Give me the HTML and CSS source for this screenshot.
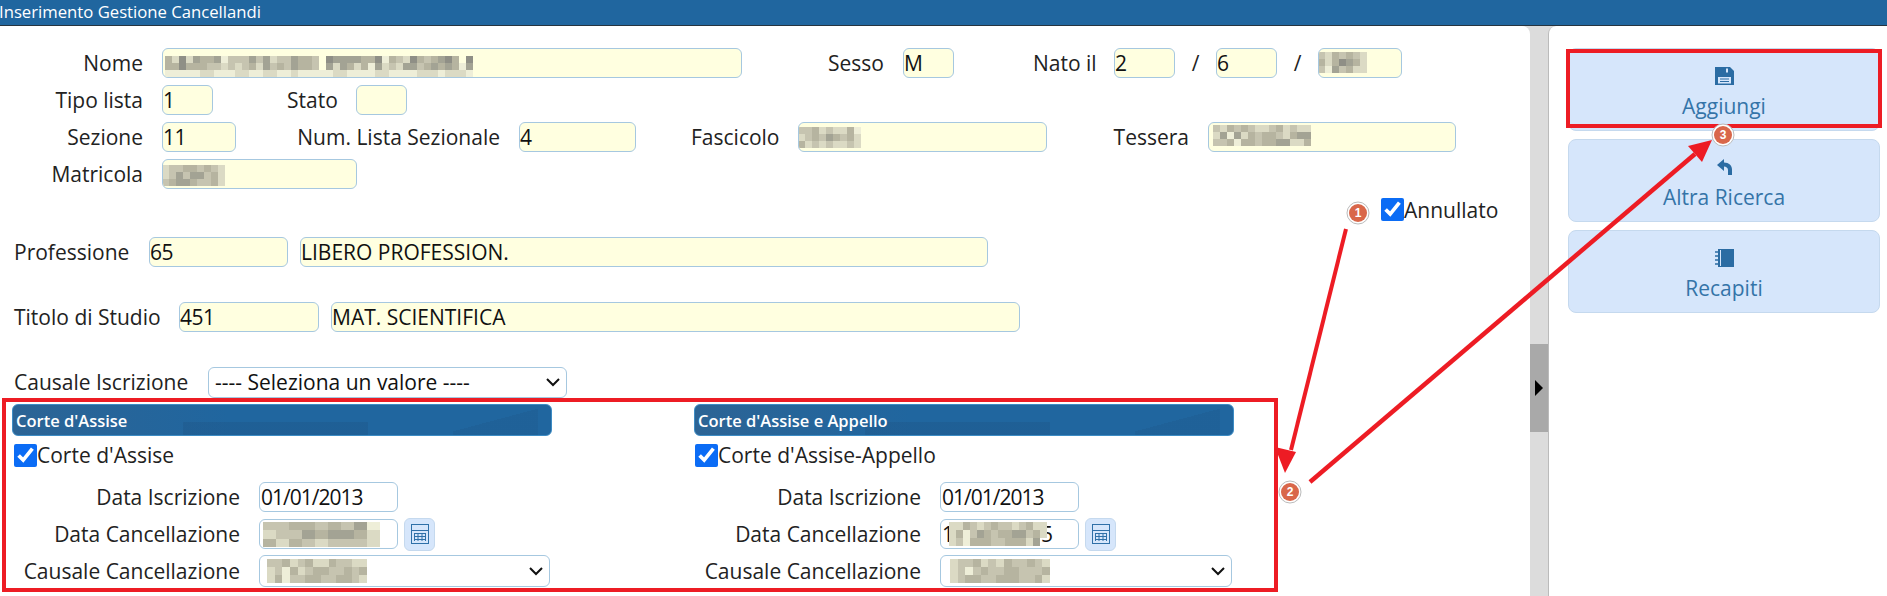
FILE: index.html
```html
<!DOCTYPE html>
<html>
<head>
<meta charset="utf-8">
<title>Inserimento Gestione Cancellandi</title>
<link rel="stylesheet" href="styles.css">
</head>
<body>
<div class="titlebar">Inserimento Gestione Cancellandi</div>
<div class="main">
  <div class="form">
    <div class="row">
      <label class="lbl lbl-top">Nome</label>
      <div class="field w-nome"><svg class="blur m-nome" viewBox="0 0 44 3" width="308" height="21" preserveAspectRatio="none">
        <path class="a" d="M2 .5h1M23 .5h1M30 .5h1M35 .5h1M40 .5h1M43 .5h1M2 1.5h1"/>
        <path class="b" d="M4 .5h1M7 .5h1M12 .5h1M14 .5h1M18 .5h1M24 .5h4M39 .5h1M14 1.5h1M18 1.5h1M23 1.5h1M25 1.5h1M30 1.5h1M34 1.5h2M38 1.5h1M40 1.5h1M43 1.5h1"/>
        <path class="c" d="M0 .5h1M5 .5h2M19 .5h2M28 .5h2M32 .5h1M36 .5h1M38 .5h1M41 .5h1M0 1.5h2M3 1.5h3M12 1.5h1M16 1.5h1M19 1.5h2M26 1.5h1M28 1.5h1M37 1.5h1M39 1.5h1M41 1.5h1"/>
        <path class="d" d="M9 .5h3M13 .5h1M16 .5h2M21 .5h1M33 .5h1M37 .5h1M6 1.5h2M9 1.5h1M11 1.5h1M15 1.5h1M17 1.5h1M21 1.5h1M32 1.5h1M36 1.5h1"/>
        <path class="e" d="M1 .5h1M3 .5h1M15 .5h1M34 .5h1M8 1.5h1M10 1.5h1M13 1.5h1M24 1.5h1M27 1.5h1M31 1.5h1M33 1.5h1M5 2.5h2M10 2.5h2M14 2.5h2M18 2.5h1M24 2.5h2M30 2.5h2M36 2.5h3M40 2.5h3"/>
        <path class="f" d="M8 .5h1M31 .5h1M29 1.5h1M42 1.5h1M0 2.5h5M7 2.5h3M12 2.5h2M16 2.5h2M19 2.5h5M26 2.5h4M32 2.5h4M39 2.5h1M43 2.5h1"/>
      </svg></div>
      <label class="lbl l-sesso">Sesso</label>
      <input class="field w-short" value="M">
      <label class="lbl l-nato">Nato il</label>
      <input class="field w-date" value="2">
      <span class="slash">/</span>
      <input class="field w-date" value="6">
      <span class="slash">/</span>
      <div class="field w-year"><svg class="blur m-year" viewBox="0 0 7 3" width="49" height="21" preserveAspectRatio="none">
        <path class="d" d="M0 .5h1M3 .5h1M5 .5h1M0 2.5h1M3 2.5h1"/>
        <path class="e" d="M1 .5h1M6 .5h1M1 1.5h1M6 1.5h1M5 2.5h2"/>
        <path class="c" d="M2 .5h1M4 .5h1M0 1.5h1M2 1.5h1M5 1.5h1M4 2.5h1"/>
        <path class="a" d="M3 1.5h1"/>
        <path class="b" d="M4 1.5h1M2 2.5h1"/>
        <path class="f" d="M1 2.5h1"/>
      </svg></div>
    </div>
    <div class="row row-next">
      <label class="lbl lbl-top">Tipo lista</label>
      <input class="field w-short" value="1">
      <label class="lbl l-stato">Stato</label>
      <input class="field w-short" value="">
    </div>
    <div class="row row-next">
      <label class="lbl lbl-top">Sezione</label>
      <input class="field w-sez" value="11">
      <label class="lbl l-num">Num. Lista Sezionale</label>
      <input class="field w-num" value="4">
      <label class="lbl l-fasc">Fascicolo</label>
      <div class="field w-fasc"><svg class="blur m-fasc" viewBox="0 0 9 3" width="63" height="21" preserveAspectRatio="none">
        <path class="b" d="M4 1.5h1"/>
        <path class="c" d="M2 .5h1M7 .5h1M2 1.5h1M5 1.5h1M7 1.5h1M0 2.5h1"/>
        <path class="d" d="M0 .5h2M4 .5h1M1 1.5h1M3 1.5h1M6 1.5h1M2 2.5h1M4 2.5h1M7 2.5h1"/>
        <path class="e" d="M3 .5h1M5 .5h2M0 1.5h1M8 1.5h1M1 2.5h1M3 2.5h1M5 2.5h2M8 2.5h1"/>
        <path class="f" d="M8 .5h1"/>
      </svg></div>
      <label class="lbl l-tess">Tessera</label>
      <div class="field w-tess"><svg class="blur m-tess" viewBox="0 0 14 3" width="98" height="21" preserveAspectRatio="none">
        <path class="b" d="M1 1.5h1M3 1.5h1M12 1.5h2M9 2.5h2"/>
        <path class="c" d="M2 .5h1M4 .5h1M9 .5h1M5 1.5h1M7 1.5h2M11 1.5h1M4 2.5h2M7 2.5h2M13 2.5h1M2 2.5h1"/>
        <path class="d" d="M0 .5h1M3 .5h1M5 .5h1M8 .5h1M11 .5h1M6 1.5h1M9 1.5h1M0 2.5h2M6 2.5h1"/>
        <path class="e" d="M1 .5h1M6 .5h2M10 .5h1M12 .5h2M0 1.5h1M4 1.5h1M10 1.5h1M12 2.5h1M11 2.5h1"/>
        <path class="f" d="M2 1.5h1M3 2.5h1"/>
      </svg></div>
    </div>
    <div class="row row-next">
      <label class="lbl lbl-top">Matricola</label>
      <div class="field w-mat"><svg class="blur m-mat" viewBox="0 0 9 3" width="63" height="21" preserveAspectRatio="none">
        <path class="c" d="M3 .5h2M6 .5h1M7 1.5h1M1 2.5h1M4 2.5h1M7 2.5h1"/>
        <path class="b" d="M2 1.5h1M4 1.5h2M2 2.5h2"/>
        <path class="d" d="M1 .5h2M5 .5h1M7 .5h1M1 1.5h1M3 1.5h1M6 1.5h1M5 2.5h2M0 2.5h1"/>
        <path class="e" d="M0 .5h1M8 .5h1M0 1.5h1M8 1.5h1M8 2.5h1"/>
      </svg></div>
    </div>
    <div class="row row-annul">
      <input type="checkbox" class="check" checked>
      <span class="check-text">Annullato</span>
    </div>
    <div class="row row-prof">
      <label class="lbl l-prof">Professione</label>
      <input class="field w-code" value="65">
      <input class="field w-prof" value="LIBERO PROFESSION.">
    </div>
    <div class="row row-tit">
      <label class="lbl l-tit">Titolo di Studio</label>
      <input class="field w-tcode" value="451">
      <input class="field w-tprof" value="MAT. SCIENTIFICA">
    </div>
    <div class="row row-caus">
      <label class="lbl l-caus">Causale Iscrizione</label>
      <select class="sel w-caus"><option>---- Seleziona un valore ----</option></select>
    </div>
    <div class="columns">
      <section class="col">
        <h3 class="sect">Corte d'Assise</h3>
        <div class="row row-check"><input type="checkbox" class="check" checked><span class="check-text">Corte d'Assise</span></div>
        <div class="row row-data"><label class="lbl lbl-col">Data Iscrizione</label><input class="plain num w-data" value="01/01/2013"></div>
        <div class="row row-canc"><label class="lbl lbl-col">Data Cancellazione</label><div class="plain w-data"><svg class="blur m-canc" viewBox="0 0 9 3" width="117" height="25" preserveAspectRatio="none">
          <path class="b" d="M3 1.5h1M5 1.5h2M7 .5h1"/>
          <path class="c" d="M2 .5h2M5 .5h1M2 2.5h1M0 2.5h1M7 1.5h1M4 1.5h1"/>
          <path class="d" d="M0 .5h2M4 .5h1M6 .5h1M1 1.5h1M2 1.5h1M3 2.5h1M5 2.5h1M7 2.5h1M6 2.5h1"/>
          <path class="e" d="M0 1.5h1M8 1.5h1M1 2.5h1M4 2.5h1M8 2.5h1"/>
          <path class="f" d="M8 .5h1"/>
        </svg></div>
          <span class="cal"><svg width="18" height="20" viewBox="0 0 18 20"><rect x=".5" y=".5" width="17" height="19" fill="none" stroke="#2f70a8"/><path d="M1 6.500h16M3 9.500h12M3 12.500h12M3 15.500h12M3.500 9v8M7 9v8M11 9v8M14.500 9v8" fill="none" stroke="#2f70a8"/></svg></span></div>
        <div class="row row-sel"><label class="lbl lbl-col">Causale Cancellazione</label><div class="sel w-csel"><svg class="blur m-sel" viewBox="0 0 13 3" width="100" height="24" preserveAspectRatio="none">
          <path class="c" d="M2 .5h1M5 .5h1M8 .5h1M3 1.5h1M6 1.5h2M10 1.5h1M12 1.5h1M1 2.5h1M5 2.5h2M9 2.5h2"/>
          <path class="d" d="M0 .5h2M4 .5h1M9 .5h2M1 1.5h1M5 1.5h1M8 1.5h2M11 1.5h1M3 2.5h2M7 2.5h2M11 2.5h1"/>
          <path class="e" d="M3 .5h1M6 .5h2M11 .5h2M0 1.5h1M4 1.5h1M0 2.5h1M12 2.5h1"/>
          <path class="f" d="M2 1.5h1M2 2.5h1"/>
        </svg><svg class="chev" width="16" height="10" viewBox="0 0 16 10"><path d="M2 2l6 6 6-6" fill="none" stroke="#111" stroke-width="2"/></svg></div></div>
      </section>
      <section class="col col-right">
        <h3 class="sect">Corte d'Assise e Appello</h3>
        <div class="row row-check"><input type="checkbox" class="check" checked><span class="check-text">Corte d'Assise-Appello</span></div>
        <div class="row row-data"><label class="lbl lbl-col">Data Iscrizione</label><input class="plain num w-data" value="01/01/2013"></div>
        <div class="row row-canc"><label class="lbl lbl-col">Data Cancellazione</label><div class="plain num w-data partial">1<svg class="blur m-part" viewBox="0 0 14 3" width="98" height="24" preserveAspectRatio="none">
          <path class="b" d="M4 1.5h1M9 1.5h2M12 2.5h1"/>
          <path class="c" d="M2 .5h1M6 .5h1M11 .5h1M1 1.5h1M5 1.5h1M7 1.5h2M12 1.5h1M3 2.5h3M8 2.5h3"/>
          <path class="d" d="M3 .5h1M5 .5h1M7 .5h2M10 .5h1M3 1.5h1M6 1.5h1M11 1.5h1M6 2.5h2M1 2.5h1"/>
          <path class="e" d="M0 .5h2M4 .5h1M9 .5h1M12 .5h2M0 1.5h1M13 1.5h1M0 2.5h1M11 2.5h1"/>
          <path class="f" d="M2 1.500h1M2 2.5h1"/>
        </svg><span class="tail">5</span></div>
          <span class="cal"><svg width="18" height="20" viewBox="0 0 18 20"><rect x=".5" y=".5" width="17" height="19" fill="none" stroke="#2f70a8"/><path d="M1 6.500h16M3 9.500h12M3 12.500h12M3 15.500h12M3.500 9v8M7 9v8M11 9v8M14.500 9v8" fill="none" stroke="#2f70a8"/></svg></span></div>
        <div class="row row-sel"><label class="lbl lbl-col">Causale Cancellazione</label><div class="sel w-csel"><svg class="blur m-sel2" viewBox="0 0 13 3" width="100" height="24" preserveAspectRatio="none">
          <path class="c" d="M3 .5h1M7 .5h1M10 .5h1M4 1.5h1M7 1.5h2M12 1.5h1M2 2.5h2M6 2.5h3M11 2.5h1"/>
          <path class="d" d="M1 .5h2M5 .5h1M8 .5h2M11 .5h1M1 1.5h1M3 1.5h1M5 1.5h2M9 1.5h3M1 2.5h1M4 2.5h2M9 2.5h2"/>
          <path class="e" d="M0 .5h1M4 .5h1M6 .5h1M12 .5h1M0 1.5h1M0 2.5h1M12 2.5h1"/>
          <path class="f" d="M2 1.5h1"/>
        </svg><svg class="chev" width="16" height="10" viewBox="0 0 16 10"><path d="M2 2l6 6 6-6" fill="none" stroke="#111" stroke-width="2"/></svg></div></div>
      </section>
    </div>
  </div>
  <div class="splitter"><div class="handle"><svg width="10" height="16" viewBox="0 0 10 16"><path d="M1 0l8 8-8 8z" fill="#000"/></svg></div></div>
  <div class="side">
    <button class="btn"><svg width="19" height="18" viewBox="0 0 19 18"><path d="M0 0h15l4 4v14H0zM11 1.500v4h2v-4zM3 10v6.500h13V10z" fill="#2b6ca3" fill-rule="evenodd"/><path d="M5 12h9M5 14.500h9" stroke="#2b6ca3"/></svg>Aggiungi</button>
    <button class="btn btn-back"><svg width="15" height="16" viewBox="0 0 15 16"><path d="M0 6l7-6v3.500c5 0 8 3 8 7V16h-4v-5c0-2-2-3.500-4-3.500V12z" fill="#2b6ca3"/></svg>Altra Ricerca</button>
    <button class="btn"><svg width="19" height="18" viewBox="0 0 19 18"><path d="M3 0h16v18H3zM5 1v16h1V1z" fill="#2b6ca3" fill-rule="evenodd"/><path d="M0 3h4M0 7h4M0 11h4M0 15h4" stroke="#2b6ca3" stroke-width="1.5"/></svg>Recapiti</button>
  </div>
</div>
<svg class="notes" width="1887" height="596">
  <rect x="4" y="400" width="1272" height="190" fill="none" stroke="#ed1c24" stroke-width="4"/>
  <rect x="1568" y="51" width="312" height="75" fill="none" stroke="#ed1c24" stroke-width="4"/>
  <path d="M1346 229L1291 450" stroke="#ed1c24" stroke-width="4"/>
  <path d="M1285 473l-10-26 21 5z" fill="#ed1c24"/>
  <path d="M1310 482L1695 154" stroke="#ed1c24" stroke-width="4.500"/>
  <path d="M1712 140l-10 22-14-16z" fill="#ed1c24"/>
  <g class="badges">
    <circle class="ring" cx="1358" cy="213" r="11"/><circle class="dot" cx="1358" cy="213" r="9"/><text x="1358" y="217">1</text>
    <circle class="ring" cx="1290" cy="492" r="11"/><circle class="dot" cx="1290" cy="492" r="9"/><text x="1290" y="496">2</text>
    <circle class="ring" cx="1723" cy="135" r="11"/><circle class="dot" cx="1723" cy="135" r="9"/><text x="1723" y="139">3</text>
  </g>
</svg>
</body>
</html>
```
FILE: styles.css
```css
html, body {
  margin: 0;
  height: 596px;
  overflow: hidden;
  background: #fff;
}
body {
  font-family: "Open Sans", sans-serif;
  font-size: 21px;
  color: #222;
  position: relative;
}
.titlebar {
  height: 25px;
  line-height: 24px;
  background: #20669f;
  border-bottom: 1px solid #26343f;
  color: #fff;
  font-size: 16.700px;
  text-indent: -1px;
  white-space: nowrap;
}
.main {
  display: flex;
  height: 570px;
  background: #dcdcdc;
}
.form {
  width: 1530px;
  flex: none;
  padding-top: 22px;
  box-sizing: border-box;
  background: #fff;
  border-top-right-radius: 8px;
}
.row {
  display: flex;
  align-items: center;
  height: 30px;
}
.row-next { margin-top: 7px; }
.row-annul { margin-top: 9px; padding-left: 1381px; height: 23px; }
.row-prof { margin-top: 16px; padding-left: 14px; }
.row-tit { margin-top: 35px; padding-left: 14px; }
.row-caus { margin-top: 35px; padding-left: 14px; }

.lbl {
  white-space: nowrap;
  flex: none;
  margin-right: 19px;
  text-align: right;
}
.lbl-top { width: 143px; }
.l-sesso { width: 55px; margin-left: 86px; margin-right: 20px; }
.l-nato { width: 63px; margin-left: 79px; margin-right: 18px; }
.l-stato { width: 50px; margin-left: 74px; }
.l-num { width: 203px; margin-left: 61px; }
.l-fasc { width: 88px; margin-left: 55px; }
.l-tess { width: 76px; margin-left: 66px; }
.l-prof { width: 116px; text-align: left; }
.l-tit { width: 146px; text-align: left; }
.l-caus { width: 175px; text-align: left; }
.lbl-col { width: 228px; }
.col-right .lbl-col { width: 227px; }

.field, .plain, .sel {
  box-sizing: border-box;
  height: 30px;
  border: 1px solid #a6c8e0;
  border-radius: 6px;
  background: #ffffe0;
  font: 21px "Open Sans", sans-serif;
  color: #111;
  padding: 0;
  flex: none;
  position: relative;
  overflow: hidden;
}
input.field { letter-spacing: -.5px; }
input.w-prof, input.w-tprof { letter-spacing: 0; }
.plain { background: #fff; padding: 0 1px; }
.num { letter-spacing: -1px; }
.sel { background: #fff; }
select.sel {
  appearance: none;
  padding: 0 6px;
  background: #fff url("data:image/svg+xml,%3Csvg xmlns='http://www.w3.org/2000/svg' width='16' height='10'%3E%3Cpath d='M2 2l6 6 6-6' fill='none' stroke='%23111' stroke-width='2'/%3E%3C/svg%3E") no-repeat right 5px center;
}
.w-nome { width: 580px; }
.w-short { width: 51px; }
.w-date { width: 61px; }
.w-year { width: 84px; }
.w-sez { width: 74px; }
.w-num { width: 117px; }
.w-fasc { width: 249px; }
.w-tess { width: 248px; }
.w-mat { width: 195px; }
.w-code { width: 139px; margin-right: 12px; }
.w-prof { width: 688px; }
.w-tcode { width: 140px; margin-right: 12px; }
.w-tprof { width: 689px; }
.w-caus { width: 359px; height: 31px; }
.w-data { width: 139px; }
.w-csel { width: 291px; height: 32px; }
.col-right .w-csel { width: 292px; }
.slash { width: 41px; text-align: center; }

/* blurred values in the original capture */
.blur { display: block; shape-rendering: crispEdges; }
.blur path { fill: none; stroke-width: 1; }
.blur .a { stroke: #8f8f86; }
.blur .b { stroke: #a3a394; }
.blur .c { stroke: #b6b4a0; }
.blur .d { stroke: #c6c4b0; }
.blur .e { stroke: #dbdac4; }
.blur .f { stroke: #eeeed8; }
.m-nome { margin: 7px 0 0 2px; }
.m-year { margin: 3px 0 0 -1px; }
.m-fasc { margin: 4px 0 0 -1px; }
.m-tess { margin: 2px 0 0 4px; }
.m-mat { margin: 5px 0 0 -1px; }
.m-canc { margin: 2px 0 0 2px; }
.m-sel { margin: 3px 0 0 7px; }
.m-sel2 { margin: 3px 0 0 9px; }
.partial { display: flex; align-items: center; }
.m-part { margin: 0 0 0 -4px; position: relative; z-index: 1; flex: none; }
.tail { margin-left: -6px; }

.check {
  width: 23px;
  height: 23px;
  margin: 0;
  accent-color: #0b6cf5;
  flex: none;
}
.columns {
  display: flex;
  margin-top: 7px;
  padding-left: 12px;
}
.col { width: 540px; }
.col-right { margin-left: 142px; }
.sect {
  margin: 0;
  height: 32px;
  line-height: 31px;
  box-sizing: border-box;
  padding-left: 3px;
  border: 1px solid #3d8cc4;
  border-radius: 6px;
  background:
    linear-gradient(180deg, transparent 55%, rgba(28, 78, 125, .28) 55%) 170px 0 / 185px 100% no-repeat,
    linear-gradient(165deg, transparent 50%, rgba(28, 78, 125, .2) 50%) 440px 0 / 85px 100% no-repeat,
    linear-gradient(90deg, #2c6495, #20669f 40%, #20669f);
  color: #fff;
  font-size: 16.500px;
  font-weight: 600;
  white-space: nowrap;
}
.row-check { margin-top: 7px; padding-left: 2px; height: 24px; }
.col-right .row-check { padding-left: 1px; }
.row-data { margin-top: 15px; }
.row-canc { margin-top: 7px; }
.row-sel { margin-top: 6px; height: 32px; }
.cal {
  width: 31px;
  height: 33px;
  margin-left: 6px;
  background: #d6e6fb;
  border: 1px solid #c5d9ee;
  box-sizing: border-box;
  border-radius: 6px;
  display: flex;
  align-items: center;
  justify-content: center;
}
.chev { position: absolute; right: 5px; top: 10px; }
.splitter {
  width: 18px;
  flex: none;
  position: relative;
}
.handle {
  position: absolute;
  top: 318px;
  left: 0;
  width: 18px;
  height: 88px;
  background: #a9a9a9;
  display: flex;
  align-items: center;
  justify-content: center;
}
.side {
  flex: 1;
  border-left: 1px solid #bbb;
  border-top-left-radius: 8px;
  background: #fff;
  padding: 22px 7px 0 19px;
  display: flex;
  flex-direction: column;
  gap: 8px;
}
.btn {
  height: 83px;
  flex: none;
  box-sizing: border-box;
  border: 1px solid #c5d9ee;
  border-radius: 8px;
  background: #d6e6fb;
  color: #3474a8;
  font: 21px "Open Sans", sans-serif;
  display: flex;
  flex-direction: column;
  align-items: center;
  gap: 7px;
  padding: 18px 0 0;
}
.btn-back { padding-top: 19px; gap: 8px; }
.notes {
  position: absolute;
  left: 0;
  top: 0;
  pointer-events: none;
}
.ring { fill: #fff; stroke: #bbb; }
.dot { fill: #d9674a; }
.badges text {
  font: 700 12px "Liberation Sans", sans-serif;
  fill: #fff;
  text-anchor: middle;
}
```
